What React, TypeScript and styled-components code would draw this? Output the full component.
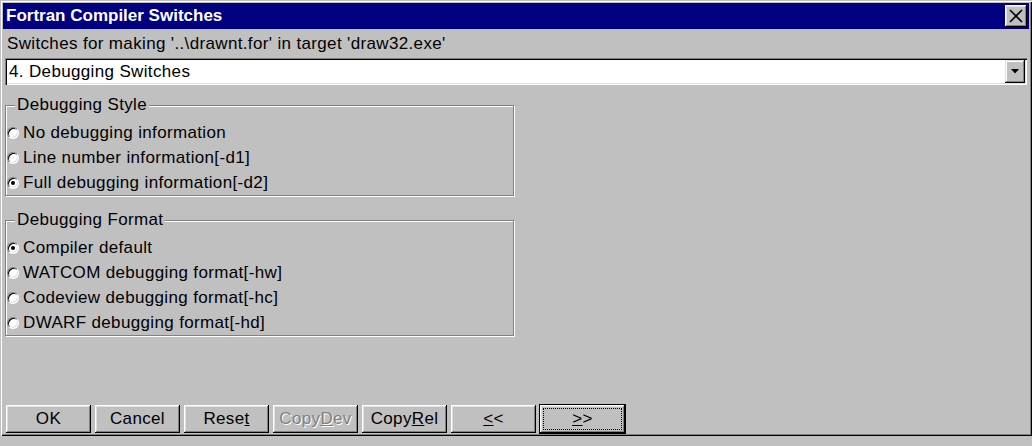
import React from 'react';
import styled, { createGlobalStyle } from 'styled-components';

const Global = createGlobalStyle`
  html, body { margin: 0; padding: 0; background: #c0c0c0; }
  body {
    font-family: "Liberation Sans", Arial, sans-serif;
    font-size: 17px;
    letter-spacing: 0.35px;
    color: #000;
    width: 1032px;
    height: 446px;
    overflow: hidden;
  }
`;

const Window = styled.div`
  box-sizing: border-box;
  width: 1032px;
  height: 436px;
  padding: 3px;
  display: flex;
  flex-direction: column;
  background: #c0c0c0;
  box-shadow: inset 1px 1px 0 #c0c0c0, inset 2px 2px 0 #fff,
    inset -1px -1px 0 #000, inset -2px -2px 0 #808080;
`;

const TitleBar = styled.div`
  flex: none;
  height: 26px;
  background: #000080;
  color: #fff;
  font-weight: bold;
  font-size: 17px;
  letter-spacing: 0;
  display: flex;
  align-items: center;
  justify-content: space-between;
  padding-left: 3px;
`;

const CloseButton = styled.div`
  width: 22px;
  height: 22px;
  box-sizing: border-box;
  margin-right: 2px;
  background: #c0c0c0;
  display: flex;
  align-items: center;
  justify-content: center;
  box-shadow: inset -1px -1px 0 #000, inset 1px 1px 0 #fff,
    inset -2px -2px 0 #808080, inset 2px 2px 0 #dfdfdf;
`;

const Body = styled.div`
  flex: 1;
  display: flex;
  flex-direction: column;
  padding: 0 2px;
  min-height: 0;
`;

const Caption = styled.div`
  height: 29px;
  display: flex;
  align-items: center;
  padding-left: 2px;
  white-space: nowrap;
`;

const Combo = styled.div`
  box-sizing: border-box;
  height: 27px;
  padding: 2px;
  background: #fff;
  display: flex;
  align-items: stretch;
  box-shadow: inset 1px 1px 0 #808080, inset 2px 2px 0 #000,
    inset -1px -1px 0 #fff, inset -2px -2px 0 #dfdfdf;
`;

const ComboText = styled.div`
  flex: 1;
  display: flex;
  align-items: center;
  padding-left: 2px;
`;

const DropButton = styled.div`
  width: 20px;
  background: #c0c0c0;
  display: flex;
  align-items: center;
  justify-content: center;
  box-shadow: inset -1px -1px 0 #000, inset 1px 1px 0 #dfdfdf,
    inset -2px -2px 0 #808080, inset 2px 2px 0 #fff;
`;

const Group = styled.fieldset<{ $top: number }>`
  box-sizing: border-box;
  width: 509px;
  margin: ${(p) => p.$top}px 0 0 0;
  padding: 5px 0 0 1px;
  border: 1px solid #808080;
  box-shadow: 1px 1px 0 #fff, inset 1px 1px 0 #fff;
  min-width: 0;
`;

const Legend = styled.legend`
  margin-left: 8px;
  padding: 0 2px;
  line-height: 20px;
  background: #c0c0c0;
`;

const Row = styled.label`
  height: 25px;
  display: flex;
  align-items: center;
  gap: 4px;
  white-space: nowrap;
`;

const RadioCircle = styled.span<{ $checked: boolean }>`
  position: relative;
  flex: none;
  box-sizing: border-box;
  width: 12px;
  height: 12px;
  border-radius: 50%;
  background: #fff;
  border: 1px solid;
  border-color: #808080 #fff #fff #808080;
  box-shadow: inset 1px 1px 0 #000, inset -1px -1px 0 #dfdfdf;
  &::after {
    content: '';
    display: ${(p) => (p.$checked ? 'block' : 'none')};
    position: absolute;
    left: 3px;
    top: 3px;
    width: 4px;
    height: 4px;
    border-radius: 50%;
    background: #000;
  }
`;

const ButtonRow = styled.div`
  margin-top: auto;
  display: flex;
  gap: 4px;
  padding-left: 1px;
`;

const Btn = styled.div<{ $default?: boolean; $disabled?: boolean }>`
  box-sizing: border-box;
  width: ${(p) => (p.$default ? 87 : 85)}px;
  height: ${(p) => (p.$default ? 30 : 28)}px;
  margin: ${(p) => (p.$default ? '-1px 0 -1px -1px' : '0')};
  border: ${(p) => (p.$default ? '1px solid #000' : '0')};
  padding: 3px;
  background: #c0c0c0;
  display: flex;
  align-items: stretch;
  color: ${(p) => (p.$disabled ? '#808080' : '#000')};
  text-shadow: ${(p) => (p.$disabled ? '1px 1px 0 #fff' : 'none')};
  box-shadow: inset -1px -1px 0 #000, inset 1px 1px 0 #fff,
    inset -2px -2px 0 #808080, inset 2px 2px 0 #dfdfdf;
  white-space: nowrap;
`;

const BtnLabel = styled.span<{ $focus?: boolean }>`
  flex: 1;
  display: flex;
  align-items: center;
  justify-content: center;
  border: 1px ${(p) => (p.$focus ? 'dotted #000' : 'solid transparent')};
`;

const radios1 = [
  { label: 'No debugging information', checked: false },
  { label: 'Line number information[-d1]', checked: false },
  { label: 'Full debugging information[-d2]', checked: true },
];

const radios2 = [
  { label: 'Compiler default', checked: true },
  { label: 'WATCOM debugging format[-hw]', checked: false },
  { label: 'Codeview debugging format[-hc]', checked: false },
  { label: 'DWARF debugging format[-hd]', checked: false },
];

export default function App() {
  return (
    <>
      <Global />
      <Window>
        <TitleBar>
          <span>Fortran Compiler Switches</span>
          <CloseButton>
            <svg width="14" height="14" viewBox="0 0 14 14">
              <path d="M1 1 L13 13 M13 1 L1 13" stroke="#000" strokeWidth="1.6" fill="none" />
            </svg>
          </CloseButton>
        </TitleBar>
        <Body>
          <Caption>Switches for making '..\drawnt.for' in target 'draw32.exe'</Caption>
          <Combo>
            <ComboText>4. Debugging Switches</ComboText>
            <DropButton>
              <svg width="8" height="5" viewBox="0 0 8 5">
                <path d="M0 0 H8 L4 4.5 Z" fill="#000" />
              </svg>
            </DropButton>
          </Combo>
          <Group $top={10}>
            <Legend>Debugging Style</Legend>
            {radios1.map((r) => (
              <Row key={r.label}>
                <RadioCircle $checked={r.checked} />
                {r.label}
              </Row>
            ))}
          </Group>
          <Group $top={14}>
            <Legend>Debugging Format</Legend>
            {radios2.map((r) => (
              <Row key={r.label}>
                <RadioCircle $checked={r.checked} />
                {r.label}
              </Row>
            ))}
          </Group>
          <ButtonRow>
            <Btn><BtnLabel>OK</BtnLabel></Btn>
            <Btn><BtnLabel>Cancel</BtnLabel></Btn>
            <Btn><BtnLabel>Rese<u>t</u></BtnLabel></Btn>
            <Btn $disabled><BtnLabel>Copy<u>D</u>ev</BtnLabel></Btn>
            <Btn><BtnLabel>Copy<u>R</u>el</BtnLabel></Btn>
            <Btn><BtnLabel><u>&lt;</u>&lt;</BtnLabel></Btn>
            <Btn $default><BtnLabel $focus><u>&gt;</u>&gt;</BtnLabel></Btn>
          </ButtonRow>
        </Body>
      </Window>
    </>
  );
}
